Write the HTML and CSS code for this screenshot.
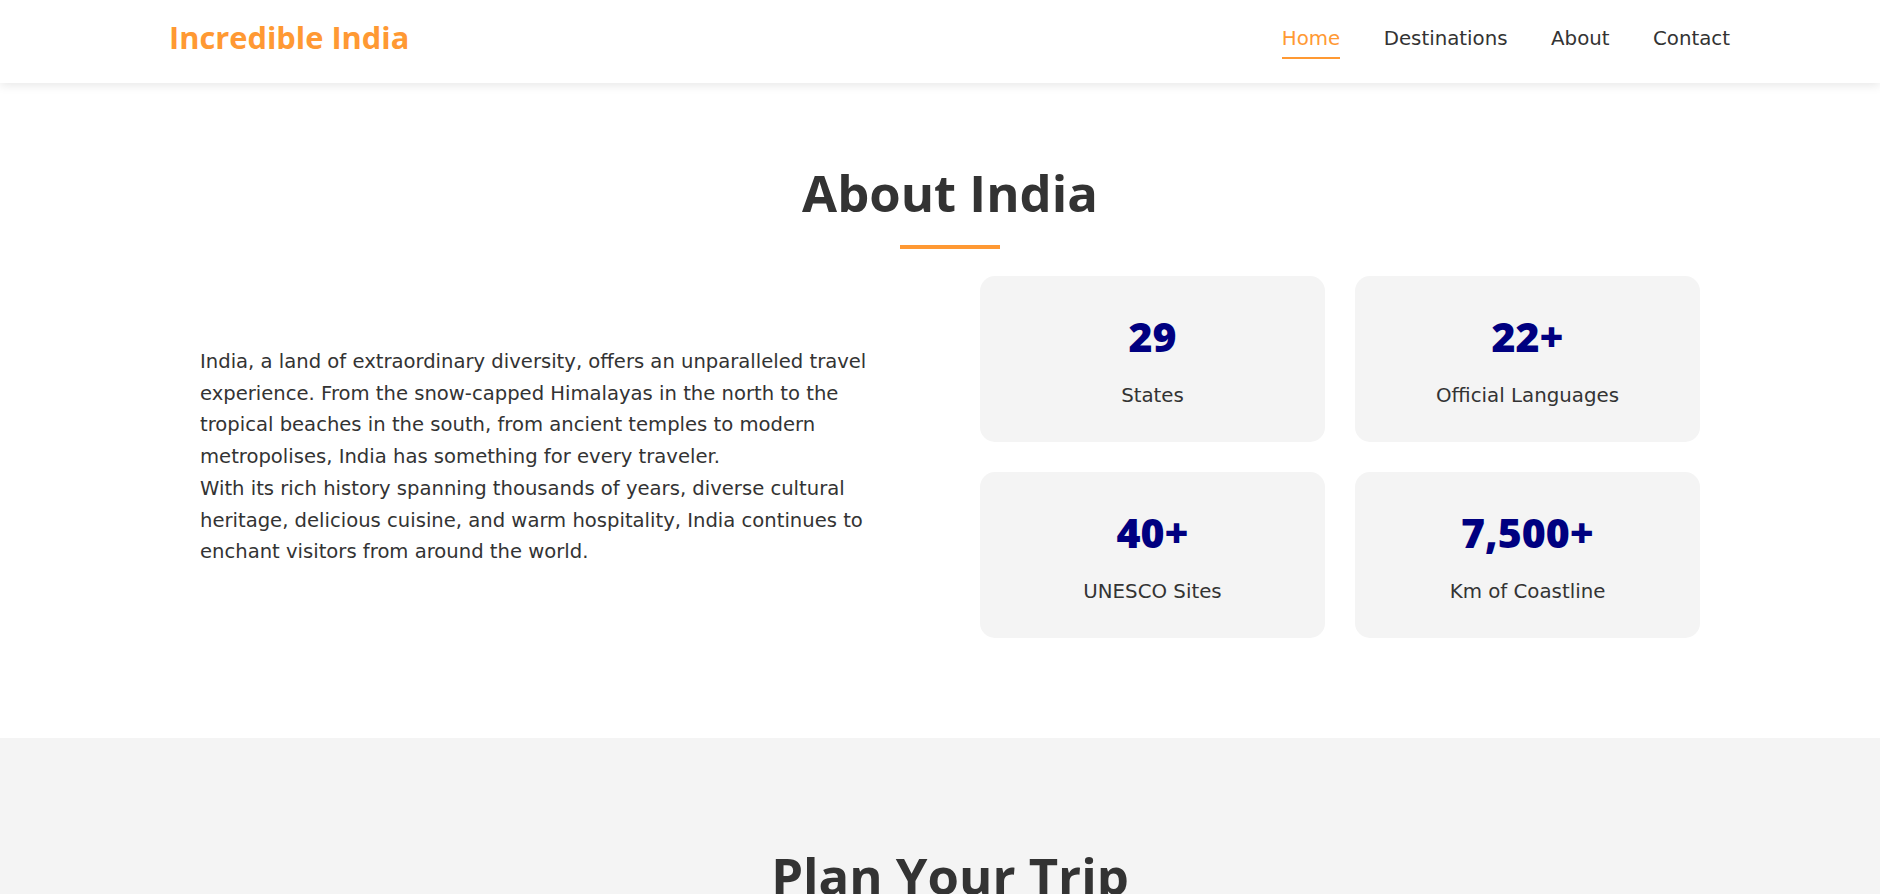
FILE: index.html
```html
<!DOCTYPE html>
<html lang="en">
<head>
<meta charset="utf-8">
<title>Incredible India</title>
<link rel="stylesheet" href="styles.css">
</head>
<body>
<header class="site-header">
  <div class="header-inner">
    <a class="logo" href="#">Incredible India</a>
    <nav class="main-nav">
      <a class="nav-link active" href="#">Home</a>
      <a class="nav-link" href="#">Destinations</a>
      <a class="nav-link" href="#">About</a>
      <a class="nav-link" href="#">Contact</a>
    </nav>
  </div>
</header>

<main>
  <section class="about">
    <div class="container">
      <h2 class="section-title">About India</h2>
      <div class="title-bar"></div>
      <div class="about-grid">
        <div class="about-text">
          <p>India, a land of extraordinary diversity, offers an unparalleled travel experience. From the snow-capped Himalayas in the north to the tropical beaches in the south, from ancient temples to modern metropolises, India has something for every traveler.</p>
          <p>With its rich history spanning thousands of years, diverse cultural heritage, delicious cuisine, and warm hospitality, India continues to enchant visitors from around the world.</p>
        </div>
        <div class="stats">
          <div class="stat-card">
            <div class="stat-num">29</div>
            <div class="stat-label">States</div>
          </div>
          <div class="stat-card">
            <div class="stat-num">22+</div>
            <div class="stat-label">Official Languages</div>
          </div>
          <div class="stat-card">
            <div class="stat-num">40+</div>
            <div class="stat-label">UNESCO Sites</div>
          </div>
          <div class="stat-card">
            <div class="stat-num">7,500+</div>
            <div class="stat-label">Km of Coastline</div>
          </div>
        </div>
      </div>
    </div>
  </section>

  <section class="plan">
    <div class="container">
      <h2 class="section-title">Plan Your Trip</h2>
      <div class="title-bar"></div>
    </div>
  </section>
</main>
</body>
</html>
```

FILE: styles.css
```css
* { box-sizing: border-box; }

html, body {
  margin: 0;
  padding: 0;
}

body {
  font-family: "DejaVu Sans", "Noto Sans", sans-serif;
  color: #333333;
  background: #ffffff;
}

a { text-decoration: none; }

/* Header */
.site-header {
  position: relative;
  z-index: 2;
  height: 83px;
  background: #ffffff;
  box-shadow: 0 2px 10px rgba(0, 0, 0, 0.1);
}

.header-inner {
  max-width: 1600px;
  height: 100%;
  margin: 0 auto;
  padding: 0 10px 0 29px;
  display: flex;
  justify-content: space-between;
  align-items: flex-start;
}

.logo {
  margin-top: 22px;
  font-family: "Open Sans", sans-serif;
  font-weight: 700;
  font-size: 30.8px;
  line-height: 1;
  color: #ff9933;
}

.main-nav {
  display: flex;
  gap: 43.5px;
  margin-top: 29px;
}

.nav-link {
  font-size: 19.8px;
  line-height: 1;
  color: #333333;
  padding-bottom: 8px;
  border-bottom: 2px solid transparent;
}

.nav-link.active {
  color: #ff9933;
  border-bottom-color: #ff9933;
}

/* Sections */
.container {
  max-width: 1520px;
  margin: 0 auto;
  padding-left: 20px;
}

.section-title {
  margin: 0;
  text-align: center;
  font-family: "Open Sans", sans-serif;
  font-weight: 700;
  font-size: 50.8px;
  line-height: 1.2;
  color: #333333;
}

.title-bar {
  width: 100px;
  height: 4px;
  margin: 21px auto 27px;
  background: #ff9933;
}

.about {
  padding: 80px 0 100px;
}

.about-grid {
  display: grid;
  grid-template-columns: 1fr 720px;
  gap: 90px;
  align-items: center;
}

.about-text p {
  margin: 0;
  font-size: 19.6px;
  line-height: 31.7px;
  color: #333333;
}

.stats {
  display: grid;
  grid-template-columns: 1fr 1fr;
  gap: 30px;
}

.stat-card {
  height: 166px;
  padding: 36px 20px 0;
  background: #f4f4f4;
  border-radius: 15px;
  text-align: center;
}

.stat-num {
  font-family: "Open Sans", sans-serif;
  font-weight: 800;
  font-size: 41px;
  line-height: 1.2;
  color: #000080;
}

.stat-label {
  margin-top: 20px;
  font-size: 19.8px;
  line-height: 1.5;
  color: #333333;
}

.plan {
  background: #f4f4f4;
  padding: 108px 0 80px;
  min-height: 400px;
}
```
